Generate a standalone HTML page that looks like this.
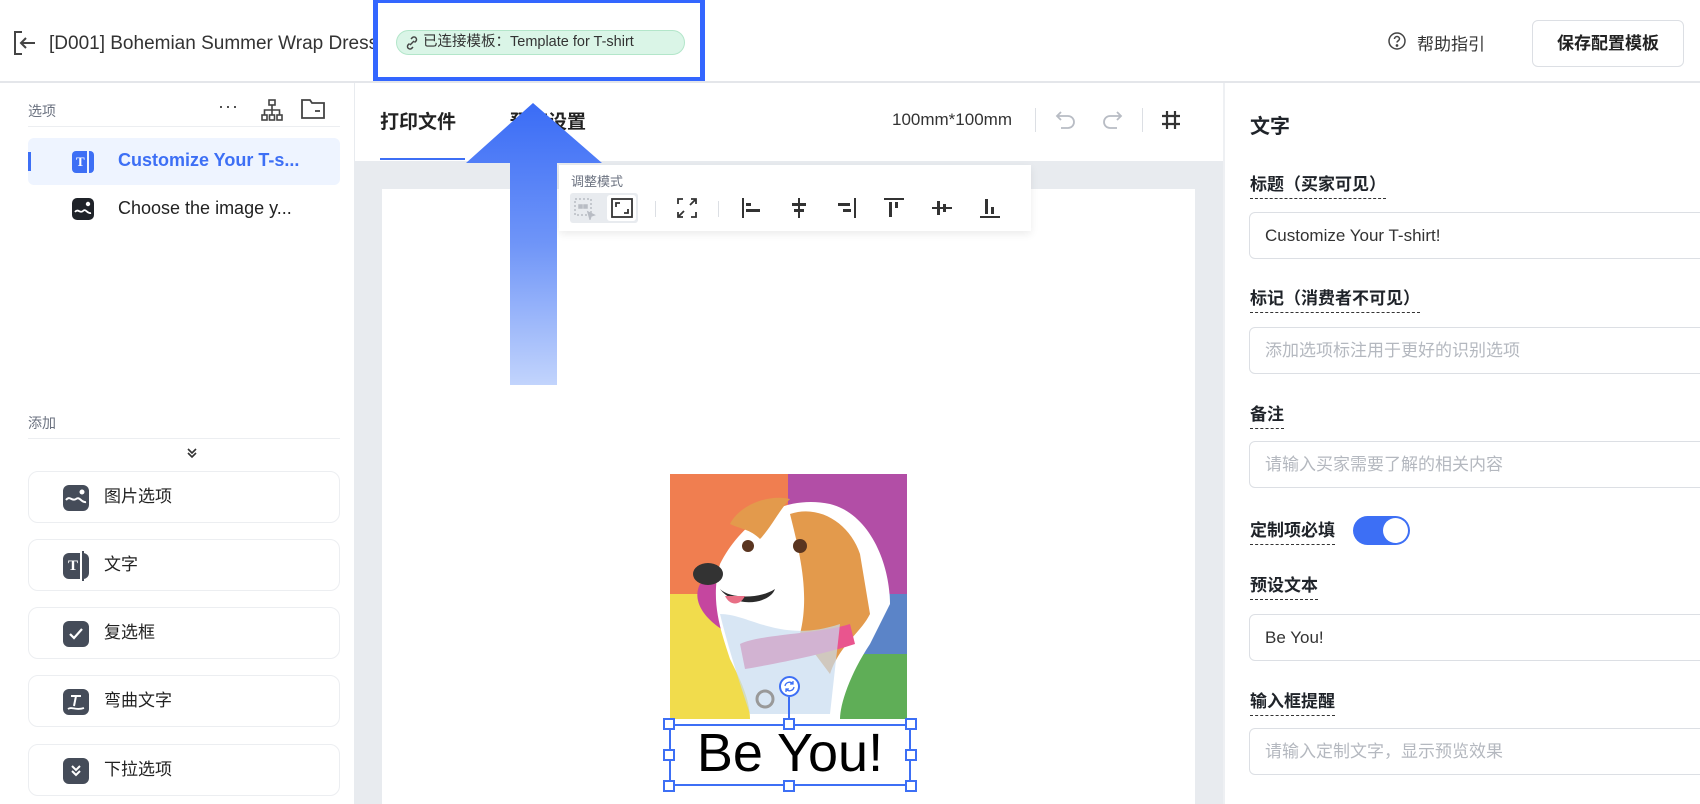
<!DOCTYPE html>
<html><head><meta charset="utf-8"><style>
*{margin:0;padding:0;box-sizing:border-box}
body{width:1700px;height:804px;overflow:hidden;background:#fff;font-family:"Liberation Sans","Noto Sans CJK SC",sans-serif;color:#222;position:relative}
.a{position:absolute}
.t{white-space:nowrap}
.lbl{position:absolute;left:1250px;font-size:17px;font-weight:bold;color:#1f2329;border-bottom:1.5px dashed #333;padding-bottom:2px;line-height:22px}
.inp{position:absolute;left:1249px;width:470px;height:47px;border:1px solid #dcdfe4;border-radius:6px;font-size:17px;line-height:45px;padding-left:15px;color:#333}
.ph{color:#b4b8bf}
.btn{position:absolute;left:28px;width:312px;height:52px;border:1px solid #eceef1;border-radius:10px;font-size:17px;line-height:50px;padding-left:75px;color:#222}
.bi{position:absolute;left:34px;top:13px;width:26px;height:26px;background:#454c59;border-radius:6px}
.h{position:absolute;width:12px;height:12px;background:#fff;border:2px solid #3d6ff5}
</style></head><body>
<!-- header -->
<svg class="a" style="left:13px;top:30px" width="24" height="26" viewBox="0 0 24 26" fill="none" stroke="#444" stroke-width="2"><path d="M9 2H2v22h7"/><path d="M22 13H8M13 8l-5 5 5 5"/></svg>
<div class="a t" style="left:49px;top:33px;font-size:19px;color:#333">[D001] Bohemian Summer Wrap Dress</div>
<div class="a" style="left:373px;top:-2px;width:332px;height:84px;border:5px solid #3366ff;background:#fff"></div>
<div class="a t" style="left:396px;top:30px;width:289px;height:25px;background:#daf5e7;border:1px solid #b3e6ca;border-radius:13px;font-size:14.5px;line-height:23px;padding-left:26px;color:#333">已连接模板：Template for T-shirt</div>
<svg class="a" style="left:405px;top:36px" width="14" height="14" viewBox="0 0 14 14" fill="none" stroke="#444" stroke-width="1.5"><path d="M6 3l1.5-1.5a2.5 2.5 0 013.5 3.5L9.5 6.5M8 11l-1.5 1.5a2.5 2.5 0 01-3.5-3.5L4.5 7.5M5 9l4-4"/></svg>
<svg class="a" style="left:1387px;top:31px" width="20" height="20" viewBox="0 0 20 20" fill="none" stroke="#444" stroke-width="1.5"><circle cx="10" cy="10" r="8"/><path d="M7.5 8a2.5 2.5 0 115 0c0 1.5-2.5 2-2.5 3.5"/><circle cx="10" cy="14.5" r=".6" fill="#444"/></svg>
<div class="a t" style="left:1417px;top:30px;font-size:17px;color:#333">帮助指引</div>
<div class="a t" style="left:1532px;top:20px;width:152px;height:47px;border:1px solid #dcdfe4;border-radius:6px;font-size:17px;font-weight:bold;line-height:45px;text-align:center;color:#222">保存配置模板</div>
<div class="a" style="left:0;top:81px;width:1700px;height:2px;background:#e4e6ea"></div>

<!-- left panel -->
<div class="a t" style="left:28px;top:101px;font-size:14px;color:#6b7280">选项</div>
<div class="a t" style="left:218px;top:96px;font-size:18px;color:#333;letter-spacing:1px">···</div>
<svg class="a" style="left:261px;top:99px" width="22" height="22" viewBox="0 0 22 22" fill="none" stroke="#444" stroke-width="1.6"><rect x="8" y="1" width="6" height="5"/><rect x="1" y="16" width="5" height="5"/><rect x="8.5" y="16" width="5" height="5"/><rect x="16" y="16" width="5" height="5"/><path d="M11 6v5M3.5 16v-5h15v5M11 11v5"/></svg>
<svg class="a" style="left:301px;top:99px" width="24" height="20" viewBox="0 0 24 20" fill="none" stroke="#444" stroke-width="1.8"><path d="M1 1h8l2 3h12v15H1z"/><path d="M14 12h5"/></svg>
<div class="a" style="left:28px;top:126px;width:312px;height:1px;background:#eceef1"></div>
<div class="a" style="left:28px;top:138px;width:312px;height:47px;background:#eef4ff;border-radius:6px"></div>
<div class="a" style="left:28px;top:152px;width:3px;height:19px;background:#3d6ff5"></div>
<div class="a" style="left:72px;top:151px;width:22px;height:22px;background:#3d6ff5;border-radius:4px;color:#fff;font-size:13px;font-weight:bold;line-height:22px;padding-left:4px;font-family:'Liberation Serif',serif">T</div>
<div class="a" style="left:87px;top:149px;width:2px;height:26px;background:#eef4ff"></div>
<div class="a t" style="left:118px;top:150px;font-size:18px;color:#3d6ff5;font-weight:bold">Customize Your T-s...</div>
<svg class="a" style="left:72px;top:198px" width="22" height="22" viewBox="0 0 22 22"><rect width="22" height="22" rx="5" fill="#1f2329"/><circle cx="16" cy="6" r="2.2" fill="#fff"/><path d="M3 14c3-4 5 2 8-1s4 3 8 2" stroke="#fff" stroke-width="1.8" fill="none"/></svg>
<div class="a t" style="left:118px;top:198px;font-size:18px;color:#222">Choose the image y...</div>

<div class="a t" style="left:28px;top:413px;font-size:14px;color:#6b7280">添加</div>
<div class="a" style="left:28px;top:438px;width:312px;height:1px;background:#eceef1"></div>
<svg class="a" style="left:185px;top:446px" width="14" height="14" viewBox="0 0 14 14" fill="none" stroke="#333" stroke-width="1.6"><path d="M3 3l4 4 4-4M3 7l4 4 4-4"/></svg>

<div class="btn" style="top:471px"><svg class="a" style="left:34px;top:13px" width="26" height="26" viewBox="0 0 26 26"><rect width="26" height="26" rx="6" fill="#454c59"/><circle cx="19" cy="7" r="2.5" fill="#fff"/><path d="M3 15c4-5 6 2 10-1s5 4 10 3" stroke="#fff" stroke-width="2" fill="none"/></svg>图片选项</div>
<div class="btn" style="top:539px"><div class="bi" style="color:#fff;font-family:'Liberation Serif',serif;font-weight:bold;font-size:15px;line-height:26px;padding-left:5px">T</div><div class="a" style="left:51px;top:9px;width:2px;height:34px;background:#fff"></div><div class="a" style="left:53px;top:11px;width:1.5px;height:30px;background:#454c59"></div>文字</div>
<div class="btn" style="top:607px"><svg class="a" style="left:34px;top:13px" width="26" height="26" viewBox="0 0 26 26"><rect width="26" height="26" rx="6" fill="#454c59"/><path d="M7 13l4 4 8-9" stroke="#fff" stroke-width="2.2" fill="none"/></svg>复选框</div>
<div class="btn" style="top:675px"><svg class="a" style="left:34px;top:13px" width="26" height="26" viewBox="0 0 26 26"><rect width="26" height="26" rx="6" fill="#454c59"/><path d="M8 7h10M13 7l-2 10" stroke="#fff" stroke-width="2" fill="none"/><path d="M5 20c4-3 7 2 16-1" stroke="#fff" stroke-width="1.8" fill="none"/></svg>弯曲文字</div>
<div class="btn" style="top:744px"><svg class="a" style="left:34px;top:13px" width="26" height="26" viewBox="0 0 26 26"><rect width="26" height="26" rx="6" fill="#454c59"/><path d="M9 8l4 4 4-4M9 13l4 4 4-4" stroke="#fff" stroke-width="2" fill="none"/></svg>下拉选项</div>

<!-- middle -->
<div class="a" style="left:354px;top:83px;width:1px;height:721px;background:#e8ebef"></div>
<div class="a t" style="left:380px;top:107px;font-size:19px;font-weight:bold;color:#222">打印文件</div>
<div class="a t" style="left:510px;top:107px;font-size:19px;font-weight:bold;color:#222">预览设置</div>
<div class="a" style="left:380px;top:158px;width:85px;height:2px;background:#3d6ff5"></div>
<div class="a t" style="left:892px;top:110px;font-size:17px;color:#333">100mm*100mm</div>
<div class="a" style="left:1035px;top:108px;width:1px;height:24px;background:#dcdfe4"></div>
<svg class="a" style="left:1055px;top:110px" width="22" height="20" viewBox="0 0 22 20" fill="none" stroke="#b8bcc4" stroke-width="1.8"><path d="M6 2L2 6l4 4M2 6h11a6 6 0 010 12H6"/></svg>
<svg class="a" style="left:1101px;top:110px" width="22" height="20" viewBox="0 0 22 20" fill="none" stroke="#b8bcc4" stroke-width="1.8"><path d="M16 2l4 4-4 4M20 6H9a6 6 0 000 12h7"/></svg>
<div class="a" style="left:1142px;top:108px;width:1px;height:24px;background:#dcdfe4"></div>
<svg class="a" style="left:1161px;top:110px" width="20" height="20" viewBox="0 0 20 20" fill="none" stroke="#333" stroke-width="2.2"><path d="M6 1v18M14 1v18M1 6h18M1 14h18"/></svg>

<div class="a" style="left:355px;top:161px;width:868px;height:643px;background:#e8ebef"></div>
<div class="a" style="left:382px;top:189px;width:813px;height:615px;background:#fff"></div>

<!-- floating toolbar -->
<div class="a" style="left:559px;top:165px;width:472px;height:66px;background:#fff;box-shadow:0 3px 8px rgba(0,0,0,.08)"></div>
<div class="a t" style="left:571px;top:171px;font-size:13px;color:#6b7280">调整模式</div>
<div class="a" style="left:570px;top:193px;width:68px;height:30px;background:#e8ebef;border-radius:3px"></div>
<div class="a" style="left:607px;top:195px;width:29px;height:26px;background:#fff;border-radius:3px"></div>
<svg class="a" style="left:574px;top:198px" width="22" height="22" viewBox="0 0 22 22" fill="none" stroke="#b8bcc4" stroke-width="1.5"><rect x="1" y="1" width="16" height="16" stroke-dasharray="2 2"/><rect x="5" y="7" width="3" height="3" fill="#b8bcc4"/><rect x="10" y="7" width="3" height="3" fill="#b8bcc4"/><path d="M14 14l6 3-3 1-1 3z" fill="#b8bcc4"/></svg>
<svg class="a" style="left:611px;top:198px" width="22" height="20" viewBox="0 0 22 20" fill="none" stroke="#333" stroke-width="1.8"><rect x="1" y="1" width="20" height="18"/><path d="M5 9V5h4M17 11v4h-4"/></svg>
<div class="a" style="left:655px;top:201px;width:1px;height:16px;background:#dcdfe4"></div>
<svg class="a" style="left:677px;top:198px" width="20" height="20" viewBox="0 0 20 20" fill="none" stroke="#333" stroke-width="1.8"><path d="M1 6V1h5M14 1h5v5M19 14v5h-5M6 19H1v-5M2 18l5-5M18 2l-5 5"/></svg>
<div class="a" style="left:718px;top:201px;width:1px;height:16px;background:#dcdfe4"></div>
<svg class="a" style="left:741px;top:198px" width="20" height="20" viewBox="0 0 20 20"><rect x="1" y="0" width="2" height="20" fill="#333"/><rect x="5" y="5" width="5" height="3" fill="#333"/><rect x="5" y="11" width="14" height="3" fill="#333"/></svg>
<svg class="a" style="left:789px;top:198px" width="20" height="20" viewBox="0 0 20 20"><rect x="9" y="0" width="2" height="20" fill="#333"/><rect x="3" y="5" width="14" height="3" fill="#333"/><rect x="5" y="11" width="10" height="3" fill="#333"/></svg>
<svg class="a" style="left:837px;top:198px" width="20" height="20" viewBox="0 0 20 20"><rect x="17" y="0" width="2" height="20" fill="#333"/><rect x="1" y="5" width="12" height="3" fill="#333"/><rect x="6" y="11" width="8" height="3" fill="#333"/></svg>
<svg class="a" style="left:884px;top:198px" width="20" height="20" viewBox="0 0 20 20"><rect x="0" y="0" width="20" height="2" fill="#333"/><rect x="5" y="4" width="3" height="15" fill="#333"/><rect x="11" y="4" width="3" height="6" fill="#333"/></svg>
<svg class="a" style="left:932px;top:198px" width="20" height="20" viewBox="0 0 20 20"><rect x="0" y="9" width="20" height="2" fill="#333"/><rect x="5" y="3" width="3" height="14" fill="#333"/><rect x="11" y="6" width="3" height="8" fill="#333"/></svg>
<svg class="a" style="left:980px;top:198px" width="20" height="20" viewBox="0 0 20 20"><rect x="0" y="18" width="20" height="2" fill="#333"/><rect x="5" y="1" width="3" height="15" fill="#333"/><rect x="11" y="9" width="3" height="7" fill="#333"/></svg>

<!-- dog image -->
<svg class="a" style="left:670px;top:474px" width="237" height="245" viewBox="0 0 237 245">
<rect x="0" y="0" width="118" height="120" fill="#f07e50"/><rect x="118" y="0" width="119" height="120" fill="#b24ea6"/>
<rect x="0" y="120" width="118" height="125" fill="#f1dc4c"/><rect x="118" y="120" width="119" height="125" fill="#5b84c8"/>
<path d="M160 180l77 0 0 65-100 0z" fill="#5fae57"/>
<path d="M30 110c20-10 40 20 50 40l-20 10c-20-10-40-30-30-50z" fill="#c5469f"/>
<path d="M50 90c20-40 60-70 110-60 40 10 60 60 60 100l-20 40c-20 30-30 60-30 75H80c0-20-10-40-20-60-10-30-20-60-10-95z" fill="#fff"/>
<path d="M120 40c30-10 60 10 70 40l10 60c-10 20-30 30-40 60l-30-40c10-40 0-80-10-120z" fill="#e39a4c"/>
<path d="M60 50c10-20 40-30 60-25-10 10-20 30-30 40-10-10-20-10-30-15z" fill="#e39a4c"/>
<path d="M70 170c20-10 80-10 110-20l5 20c-30 10-80 20-110 25z" fill="#e9558e"/>
<path d="M50 140c30 0 60 30 120 10l-10 90H80c-10-30-20-60-30-100z" fill="#c7dbef" opacity=".7"/>
<ellipse cx="38" cy="100" rx="15" ry="11" fill="#333"/>
<path d="M50 115c10 10 40 10 55 0-5 15-40 20-55 0z" fill="#2b2b2b"/>
<path d="M55 122c5 10 15 10 20 0z" fill="#e86f86"/>
<circle cx="78" cy="72" r="6" fill="#5a3520"/><circle cx="130" cy="72" r="7" fill="#5a3520"/>
<circle cx="95" cy="225" r="8" fill="none" stroke="#999" stroke-width="3"/>
</svg>

<!-- selection box -->
<div class="a" style="left:669px;top:724px;width:242px;height:62px;border:2px solid #3d6ff5"></div>
<div class="a t" style="left:669px;top:722px;width:242px;text-align:center;font-size:54px;line-height:62px;color:#000">Be You!</div>
<div class="a" style="left:788px;top:697px;width:2px;height:24px;background:#3d6ff5"></div>
<div class="a" style="left:779px;top:676px;width:21px;height:21px;border-radius:50%;background:#fff;border:2px solid #3d6ff5"></div>
<svg class="a" style="left:783px;top:680px" width="13" height="13" viewBox="0 0 13 13" fill="none" stroke="#3d6ff5" stroke-width="1.3"><path d="M2 6a4.5 4.5 0 018-2M11 7a4.5 4.5 0 01-8 2M10 1v3H7M3 12V9h3"/></svg>
<div class="h" style="left:663px;top:718px"></div><div class="h" style="left:783px;top:718px"></div><div class="h" style="left:905px;top:718px"></div>
<div class="h" style="left:663px;top:749px"></div><div class="h" style="left:905px;top:749px"></div>
<div class="h" style="left:663px;top:780px"></div><div class="h" style="left:783px;top:780px"></div><div class="h" style="left:905px;top:780px"></div>

<!-- arrow -->
<svg class="a" style="left:460px;top:98px" width="150" height="290" viewBox="0 0 150 290">
<defs><linearGradient id="g" x1="0" y1="0" x2="0" y2="1"><stop offset="0" stop-color="#3a6cf6"/><stop offset=".5" stop-color="#6f95f8"/><stop offset="1" stop-color="#c2d4fc"/></linearGradient></defs>
<path d="M73 5L142 65H97V287H50V65H6z" fill="url(#g)"/>
</svg>

<!-- right panel -->
<div class="a" style="left:1223px;top:83px;width:2px;height:721px;background:#eef0f3"></div>
<div class="a t" style="left:1250px;top:110px;font-size:20px;font-weight:bold;color:#1f2329">文字</div>
<div class="lbl t" style="top:174px">标题（买家可见）</div>
<div class="inp t" style="top:212px">Customize Your T-shirt!</div>
<div class="lbl t" style="top:288px">标记（消费者不可见）</div>
<div class="inp t ph" style="top:327px">添加选项标注用于更好的识别选项</div>
<div class="lbl t" style="top:404px">备注</div>
<div class="inp t ph" style="top:441px">请输入买家需要了解的相关内容</div>
<div class="lbl t" style="top:520px">定制项必填</div>
<div class="a" style="left:1353px;top:516px;width:57px;height:29px;border-radius:15px;background:#3d6ff5"></div>
<div class="a" style="left:1383px;top:518px;width:25px;height:25px;border-radius:50%;background:#fff"></div>
<div class="lbl t" style="top:575px">预设文本</div>
<div class="inp t" style="top:614px">Be You!</div>
<div class="lbl t" style="top:691px">输入框提醒</div>
<div class="inp t ph" style="top:728px">请输入定制文字，显示预览效果</div>
</body></html>
